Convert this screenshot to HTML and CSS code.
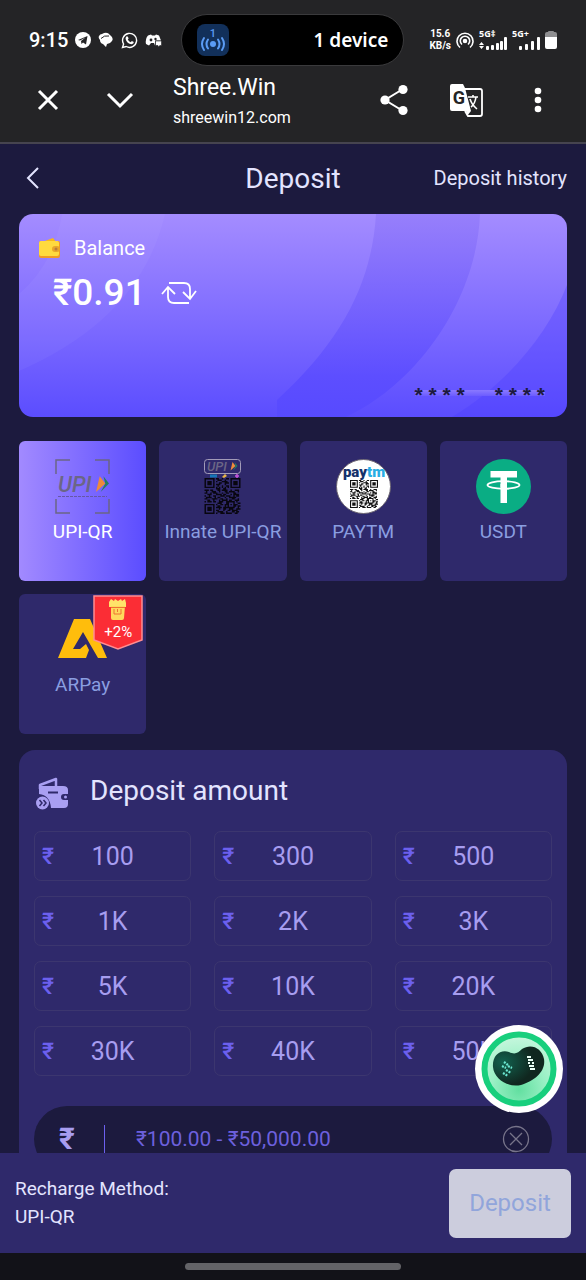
FILE: index.html
```html
<!DOCTYPE html>
<html lang="en">
<head>
    <meta charset="UTF-8">
    <meta name="viewport" content="width=device-width, initial-scale=1">
    <title>Deposit</title>
    <link rel="stylesheet" href="styles.css">
</head>
<body>
<svg class="defs" aria-hidden="true">
    <symbol id="qr" viewBox="0 0 25 25">
        <path fill="none" stroke="currentColor" d="M.5.5h6v6h-6zM18.500.5h6v6h-6zM.5 18.500h6v6h-6z"/>
        <path fill="currentColor" d="M2 2h3v3h-3zM20 2h3v3h-3zM2 20h3v3h-3z"/>
        <path stroke="currentColor" d="M8 .5h2m2 0h1m2 0h2M9 1.500h3m2 0h1M8 2.500h1m3 0h4M10 3.500h2m2 0h3M8 4.500h3m3 0h1M9 5.500h1m2 0h1m2 0h2M8 6.500h1m1 0h1m1 0h1m1 0h1m1 0h1M8 7.500h3m2 0h2M0 8.500h3m1 0h2m3 0h2m1 0h4m2 0h1m2 0h3M1 9.500h1m3 0h3m2 0h1m3 0h2m1 0h4m2 0h1M0 10.500h2m2 0h1m1 0h3m3 0h1m2 0h2m3 0h2M2 11.500h3m3 0h4m1 0h2m3 0h1m1 0h4M0 12.500h1m2 0h1m2 0h2m3 0h3m1 0h3m2 0h1m1 0h2M1 13.500h4m2 0h1m1 0h2m3 0h1m2 0h5M0 14.500h2m3 0h4m2 0h2m2 0h1m3 0h2m2 0h1M2 15.500h2m2 0h1m3 0h1m1 0h4m1 0h2m2 0h3M0 16.500h1m1 0h3m1 0h2m2 0h3m2 0h6m1 0h1M9 17.500h3m3 0h2m3 0h1m2 0h2M8 18.500h1m2 0h2m1 0h3m1 0h1m1 0h3M9 19.500h2m3 0h1m1 0h1m3 0h2m1 0h2M8 20.500h4m1 0h8m2 0h1M10 21.500h1m2 0h2m2 0h3m2 0h3M8 22.500h2m3 0h1m2 0h2m1 0h4M9 23.500h4m2 0h1m3 0h2m1 0h2M8 24.500h1m2 0h3m1 0h4m2 0h2"/>
    </symbol>
    <symbol id="upi-arrow" viewBox="0 0 14 18">
        <path d="M4 0 10 8 0 17z" fill="#ee8a3c"/>
        <path d="M8 0 14 8 5 17 10 8z" fill="#267e62"/>
    </symbol>
</svg>

<!-- status bar -->
<div class="status">
    <div class="status-left">
        <span class="clock">9:15</span>
        <svg width="16" height="16" viewBox="0 0 16 16"><circle cx="8" cy="8" r="8" fill="#fff"/><path d="M3 8 12.500 4 11 12.500 8 10.500 6.500 12 6 9 10.500 5.500 5 8.600z" fill="#242426"/></svg>
        <svg width="16" height="16" viewBox="0 0 16 16" fill="#fff"><path d="M4 2Q9-1 12 3q4 3 2 6-2 3-5 3l-1 3-3-3Q2 11 2 8 0 6 1 4 2 2 4 2z"/><path d="M3 6.500Q6 3 11 4" fill="none" stroke="#242426"/></svg>
        <svg width="17" height="17" viewBox="0 0 17 17"><path d="M1.500 15.500 2.600 12A7 7 0 1 1 5.200 14.500z" fill="none" stroke="#fff" stroke-width="1.400"/><path d="M5 5q1-1.500 2 0l.6 1.500-.8 1q1 2 3 2.700l1-1.200 2 1q0 2-2.300 2.300Q6 12 4.600 7 4.500 6 5 5z" fill="#fff"/></svg>
        <svg width="17" height="16" viewBox="0 0 17 16"><path d="M3 3.500 6 2.500 7 3.500h3l1-1 3 1 2 5H10v5L9 11H6L4 13.500 1 12Q0 7 3 3.500z" fill="#fff"/><circle cx="6" cy="8" r="1.400" fill="#242426"/><circle cx="10.500" cy="7" r="1.200" fill="#242426"/><path d="M10.500 9h6v4.500H15L13 15v-1.500h-2.500z" fill="#fff" stroke="#242426" stroke-width=".6"/></svg>
    </div>
    <div class="island">
        <svg width="32" height="32" viewBox="0 0 32 32">
            <rect width="32" height="32" rx="8" fill="#12305a"/>
            <text class="count" x="16" y="13">1</text>
            <circle cx="16" cy="20" r="3" fill="#5b9cf5"/>
            <path d="M11 15.500q-3 4.500 0 9M7 14q-4 6 0 12M21 15.500q3 4.500 0 9M25 14q4 6 0 12" fill="none" stroke="#5b9cf5" stroke-width="2" stroke-linecap="round"/>
        </svg>
        <span>1 device</span>
    </div>
    <div class="status-right">
        <span class="speed">15.6<br>KB/s</span>
        <svg width="18" height="17" viewBox="0 0 18 17" fill="none" stroke="#fff" stroke-width="1.600"><path d="M4 15.500a8 8 0 1 1 10 0M6 12.500a4.700 4.700 0 1 1 6 0"/><circle cx="9" cy="9" r="1.500" fill="#fff"/></svg>
        <div class="signal">
            <span>5G‡</span>
            <svg width="28" height="13" viewBox="0 0 28 13" fill="#fff"><path d="M0 8 2.500 5 5 8zM0 9h5l-2.500 3z"/><rect x="7" y="9" width="3" height="4" rx="1"/><rect x="12" y="8" width="3" height="5" rx="1"/><rect x="17" y="6" width="3" height="7" rx="1"/><rect x="21" y="4" width="3" height="9" rx="1"/><rect x="25" y="0" width="3" height="13" rx="1"/></svg>
        </div>
        <div class="signal">
            <span>5G+</span>
            <svg width="28" height="13" viewBox="0 0 28 13" fill="#fff"><rect x="7" y="9" width="3" height="4" rx="1"/><rect x="13" y="7" width="3" height="6" rx="1"/><rect x="19" y="4" width="3" height="9" rx="1"/><rect x="25" y="0" width="3" height="13" rx="1"/></svg>
        </div>
        <svg width="12" height="18" viewBox="0 0 12 18"><path d="M2 1h1q0-1 1-1h4q1 0 1 1h1q2 0 2 2v4H0V3q0-2 2-2z" fill="#8e8e90"/><path d="M0 6h12v10q0 2-2 2H2q-2 0-2-2z" fill="#fff"/></svg>
    </div>
</div>

<!-- browser toolbar -->
<div class="toolbar">
    <button class="tool" aria-label="Close"><svg width="24" height="24" viewBox="0 0 24 24"><path d="M3 3 21 21M21 3 3 21"/></svg></button>
    <button class="tool" aria-label="Minimise"><svg width="28" height="24" viewBox="0 0 28 24"><path d="M2 6 14 18 26 6"/></svg></button>
    <div class="site">
        <div class="site-name">Shree.Win</div>
        <div class="site-url">shreewin12.com</div>
    </div>
    <button class="tool" aria-label="Share"><svg width="28" height="32" viewBox="0 0 28 32"><path d="M23 5 5 16 23 27" stroke-width="2"/><g fill="#fff" stroke="none"><circle cx="23" cy="5.500" r="4.600"/><circle cx="5" cy="16" r="4.600"/><circle cx="23" cy="26.500" r="4.600"/></g></svg></button>
    <button class="tool" aria-label="Translate"><svg width="34" height="34" viewBox="0 0 34 34"><path d="M16 6h15q2 0 2 2v23q0 2-2 2H19l-3-5" stroke-width="1.800"/><path d="M3 1h11l2 4 6 23H3q-2 0-2-2V3q0-2 2-2zM17 28h5l-4 5z" fill="#fff" stroke="none"/><text class="glyph" x="10" y="21">G</text><path d="M19 14h10M24 12v2M27 14q-1 7-5 10M21 16q2 6 7 10" stroke-width="1.600"/></svg></button>
    <button class="tool" aria-label="More"><svg width="8" height="26" viewBox="0 0 8 26"><g fill="#fff" stroke="none"><circle cx="4" cy="4" r="3.300"/><circle cx="4" cy="13" r="3.300"/><circle cx="4" cy="22" r="3.300"/></g></svg></button>
</div>

<div class="page">
    <header class="head">
        <a class="back" href="#" aria-label="Back"><svg width="14" height="22" viewBox="0 0 14 22"><path d="M12 1 2 11 12 21" fill="none" stroke="#e3e4ff" stroke-width="2"/></svg></a>
        <h1>Deposit</h1>
        <a class="history" href="#">Deposit history</a>
    </header>

    <section class="balance">
        <svg class="balance-bg" viewBox="0 0 548 203" preserveAspectRatio="none" aria-hidden="true">
            <defs>
                <linearGradient id="band" x1="0" y1="0" x2="0" y2="1"><stop offset="0" stop-color="#977ffb"/><stop offset=".8" stop-color="#5d4eff"/><stop offset="1" stop-color="#574aff"/></linearGradient>
            </defs>
            <path d="M43 0H146Q122 104 0 157V80Q35 50 43 0z" fill="#fff" opacity=".04"/>
            <path d="M357 0C353 65 326 124 258 186V203H327C400 169 458 84 461 0z" fill="url(#band)"/>
            <path d="M548 71C529 120 489 169 433 203H548z" fill="#4a3bff" opacity=".3"/>
        </svg>
        <div class="balance-title">
            <svg width="22" height="20" viewBox="0 0 22 20"><path d="M3 4 14 0 18 5z" fill="#f7b71d"/><rect y="3" width="21" height="17" rx="2" fill="#f19a24"/><rect y="3" width="20" height="15" rx="2" fill="#ffda3f"/><rect x="13" y="8" width="8" height="6" rx="3" fill="#e9a62a"/><circle cx="17" cy="11" r="1.500" fill="#bb7c3c"/></svg>
            <span>Balance</span>
        </div>
        <div class="balance-amount">
            <span>₹0.91</span>
            <button class="refresh" aria-label="Refresh"><svg width="36" height="24" viewBox="0 0 36 24"><path d="M8 2H23Q29 2 29 8V17M22 11 29 18 35 10M28 22H13Q7 22 7 16V7M1 13 7 6 14 13" fill="none" stroke="#fff" stroke-width="1.800"/></svg></button>
        </div>
        <div class="stars"><span>* * * *</span><span>* * * *</span></div>
    </section>

    <section class="methods">
        <button class="method active">
            <svg width="55" height="55" viewBox="0 0 55 55"><path d="M1 15V1H15M40 1H54V15M54 40V54H40M15 54H1V40" fill="none" stroke="#6b6685" stroke-width="1.500"/><text class="upi" x="3" y="33">UPI</text><use href="#upi-arrow" x="41" y="17" width="13" height="17"/><path d="M3 37.500H52" stroke="#6558a6" stroke-dasharray="3 1"/></svg>
            <span>UPI-QR</span>
        </button>
        <button class="method">
            <svg width="55" height="55" viewBox="0 0 55 55"><rect x="9.500" y=".5" width="36" height="14" rx="3" fill="none" stroke="#a29bb8"/><text class="upi small" x="12" y="12">UPI</text><use href="#upi-arrow" x="35" y="3" width="8" height="9"/><path d="M15 17h7" stroke="#1576b7" stroke-width="3"/><path d="M27 18l3-3 2 2-3 2z" fill="#e7b545"/><path d="M42 15v4m-2-2h4" stroke="#c955dc" stroke-width="1.500"/><g color="#08060f"><use href="#qr" x="9" y="19" width="37" height="36"/></g></svg>
            <span>Innate UPI-QR</span>
        </button>
        <button class="method">
            <svg width="55" height="55" viewBox="0 0 55 55"><circle cx="27.500" cy="27.500" r="27" fill="#fff" stroke="#6b6470"/><text class="paytm" x="28" y="18">pay<tspan fill="#29aee4">tm</tspan></text><g color="#111"><use href="#qr" x="14" y="21" width="28" height="28"/></g></svg>
            <span>PAYTM</span>
        </button>
        <button class="method">
            <svg width="55" height="55" viewBox="0 0 55 55"><circle cx="27.500" cy="27.500" r="27.500" fill="#0aad84"/><path d="M14.500 12H41V18.500H31V44H24.500V18.500H14.500z" fill="#fff"/><ellipse cx="27.500" cy="26" rx="16" ry="3.800" fill="none" stroke="#fff" stroke-width="1.800"/><path d="M24.500 25h6.500v3.500h-6.500z" fill="#fff"/></svg>
            <span>USDT</span>
        </button>
        <button class="method">
            <svg width="55" height="55" viewBox="0 0 55 55"><path d="M19 7H35L52 46H43L28 20 18 37H25L31 32 34 38 31 46H3z" fill="#ffbd0c"/></svg>
            <span>ARPay</span>
            <span class="bonus">
                <svg width="50" height="55" viewBox="0 0 50 55" aria-hidden="true"><path d="M1 1H49V45L25 54 1 45z" fill="#fb2d35" stroke="#ff8d91" stroke-width="1.500"/><path d="M16 7 18 4 21 6 22 4 25 6 28 4 29 6 32 4 33 8V12H16z" fill="#ffe36a"/><path d="M18 11H32L31 23Q31 25 29 25H20Q18 25 18 23z" fill="#ffd85c"/><path d="M18 12.500H32M21 14V19H28V14M24.500 14V17" fill="none" stroke="#ef7132"/></svg>
                <b>+2%</b>
            </span>
        </button>
    </section>

    <section class="amount">
        <h2>
            <svg width="33" height="33" viewBox="0 0 33 33"><path d="M4 12V8L20 2V10" fill="none" stroke="#a99ff2" stroke-width="2.500" stroke-linejoin="round"/><path d="M5 9H27Q32 9 32 13V17H28Q25 17 25 20T28 23H32V27Q32 31 28 31H15Q14 18 3 17V11Q3 9 5 9z" fill="#a99ff2"/><path d="M12 15.500H22" stroke="#2f296b" stroke-width="2"/><circle cx="29.500" cy="20" r="1.500" fill="#a99ff2"/><circle cx="6.500" cy="26" r="6.500" fill="#a99ff2"/><path d="M3.500 23 6 26 3.500 29M7.500 23 10 26 7.500 29" fill="none" stroke="#2f296b" stroke-width="1.500"/></svg>
            Deposit amount
        </h2>
        <div class="keys">
            <button class="key"><i>₹</i><span>100</span></button>
            <button class="key"><i>₹</i><span>300</span></button>
            <button class="key"><i>₹</i><span>500</span></button>
            <button class="key"><i>₹</i><span>1K</span></button>
            <button class="key"><i>₹</i><span>2K</span></button>
            <button class="key"><i>₹</i><span>3K</span></button>
            <button class="key"><i>₹</i><span>5K</span></button>
            <button class="key"><i>₹</i><span>10K</span></button>
            <button class="key"><i>₹</i><span>20K</span></button>
            <button class="key"><i>₹</i><span>30K</span></button>
            <button class="key"><i>₹</i><span>40K</span></button>
            <button class="key"><i>₹</i><span>50K</span></button>
        </div>
        <div class="field">
            <label for="sum">₹</label>
            <input id="sum" type="text" inputmode="decimal" placeholder="₹100.00 - ₹50,000.00">
            <button class="clear" aria-label="Clear"><svg width="28" height="28" viewBox="0 0 28 28"><path d="M8 8 20 20M20 8 8 20" stroke="#77748a" stroke-width="1.300"/><circle cx="14" cy="14" r="12.500" fill="none" stroke="#77748a" stroke-width="1.300"/></svg></button>
        </div>
    </section>
</div>

<footer class="foot">
    <p>Recharge Method:<br>UPI-QR</p>
    <button class="submit">Deposit</button>
    <!-- floating support button -->
    <button class="support" aria-label="Support">
        <svg width="88" height="88" viewBox="0 0 88 88">
            <defs>
                <radialGradient id="glow" cx=".5" cy=".8" r=".8"><stop offset="0" stop-color="#62dfa0"/><stop offset=".5" stop-color="#9af0c5"/><stop offset="1" stop-color="#c9f7df"/></radialGradient>
                <radialGradient id="bean" cx=".2" cy=".4" r=".6"><stop offset="0" stop-color="#12614e"/><stop offset="1" stop-color="#10271f"/></radialGradient>
            </defs>
            <circle cx="44" cy="44" r="44" fill="#fff"/>
            <circle cx="44" cy="44" r="34.500" fill="url(#glow)" stroke="#18cf7d" stroke-width="6"/>
            <path d="M18 42C17 31 25 24 34 27 40 30 43 28 47 24 56 18 67 23 69 34 71 46 60 56 46 60 33 63 19 54 18 42z" fill="url(#bean)"/>
            <path d="M29 37 33 40M27 41 31 43M33 41 37 43M31 45 36 48M28 48 33 51" stroke="#6be6d0" stroke-width="2.200" stroke-dasharray="2 1"/>
            <path d="M52 32H56M53 35H58M53 38H55M57 38H59M54 41H59M55 44H60" stroke="#eafff5" stroke-width="2"/>
        </svg>
    </button>
</footer>
<div class="navbar"><span></span></div>
</body>
</html>
```
FILE: styles.css
```css
*{box-sizing:border-box;}
body{
    display:flex;
    flex-direction:column;
    height:100vh;
    margin:0;
    overflow:hidden;
    background-color:#1c1a3e;
    color:#e3e4ff;
    font-family:Roboto,"Liberation Sans",sans-serif;
}
h1,h2,p{margin:0;font-weight:400;}
a{color:inherit;text-decoration:none;}
button{padding:0;border:0;background:none;color:inherit;font:inherit;cursor:pointer;}
svg{display:block;flex:none;}
.defs{position:absolute;width:0;height:0;}

/*status bar*/
.status{
    display:flex;
    flex:none;
    align-items:center;
    padding:14px 29px 0;
    background-color:#242426;
    color:#fff;
}
.status-left,.status-right{display:flex;align-items:center;}
.status-left{gap:7px;}
.status-right{gap:5px;}
.clock{font-size:20px;font-weight:500;}
.island{
    display:flex;
    flex:1;
    align-items:center;
    justify-content:space-between;
    height:52px;
    margin:0 25px 0 19px;
    padding:0 15px;
    border:1px solid #3a3a3c;
    border-radius:26px;
    background-color:#000;
    font:600 19px "Noto Sans",sans-serif;
}
.count{fill:#5b9cf5;font:500 11px Roboto,sans-serif;text-anchor:middle;}
.speed{font-size:10px;font-weight:700;line-height:12px;text-align:center;}
.signal span{display:block;font:700 9px/7px "Noto Sans",sans-serif;}

/*browser toolbar*/
.toolbar{
    display:flex;
    flex:none;
    align-items:center;
    gap:24px;
    height:78px;
    padding:0 24px 8px;
    border-bottom:2px solid #46444f;
    background-color:#242426;
    color:#fff;
}
.tool{display:flex;align-items:center;justify-content:center;width:48px;height:48px;}
.tool svg{fill:none;stroke:#fff;stroke-width:3;}
.tool .glyph{fill:#242426;stroke:none;font:700 18px Roboto,sans-serif;text-anchor:middle;}
.site{flex:1;margin-left:5px;padding-top:4px;}
.site-name{font-size:23px;line-height:32px;}
.site-url{font-size:16px;line-height:28px;}

/*page*/
.page{flex:1;min-height:0;padding:0 19px;overflow:hidden;}
.head{display:grid;grid-template-columns:1fr auto 1fr;align-items:center;height:68px;margin-bottom:2px;}
.head h1{font-size:28px;}
.back{padding-left:7px;}
.history{font-size:20px;text-align:right;}

.balance{
    display:flex;
    flex-direction:column;
    position:relative;
    height:203px;
    padding:22px 22px 14px 20px;
    overflow:hidden;
    border-radius:14px;
    background:linear-gradient(#a48cff,#7967ff 60%,#5b4dff);
    color:#fff;
}
.balance-bg{position:absolute;top:0;left:0;width:100%;height:100%;}
.balance-title,.balance-amount,.stars{display:flex;position:relative;align-items:center;}
.balance-title{gap:13px;font-size:20px;line-height:24px;}
.balance-amount{gap:15px;padding-left:14px;font-size:37px;font-weight:500;line-height:66px;}
.stars{
    gap:30px;
    align-self:flex-end;
    height:16px;
    margin-top:auto;
    background:linear-gradient(#8a79ff,#6c5cff) center 3px/100% 6px no-repeat;
    color:#1c1a3e;
    font:700 21px/32px "Liberation Sans",sans-serif;
}

.methods{display:grid;grid-template-columns:repeat(4,1fr);gap:13px;margin-top:24px;}
.method{
    display:flex;
    flex-direction:column;
    position:relative;
    align-items:center;
    gap:6px;
    height:140px;
    padding-top:18px;
    border-radius:6px;
    background-color:#2f296b;
    color:#8a9ee0;
    font-size:19px;
    line-height:24px;
    white-space:nowrap;
}
.method.active{background:linear-gradient(90deg,#a28aff,#5b4dff);color:#fff;}
.upi{fill:#6b6685;font:italic 500 22px Roboto,sans-serif;}
.upi.small{font-size:13px;}
.paytm{fill:#14316b;font:900 15px Roboto,sans-serif;text-anchor:middle;}
.bonus{position:absolute;top:1px;right:3px;color:#fff;}
.bonus b{position:absolute;top:28px;left:0;width:100%;font-size:15px;font-weight:400;line-height:18px;text-align:center;}

.amount{margin-top:16px;padding:15px;border-radius:16px;background-color:#2f296b;}
.amount h2{display:flex;align-items:center;gap:21px;height:50px;padding-left:2px;font-size:28px;}
.amount h2 svg{margin-top:6px;}
.keys{display:grid;grid-template-columns:repeat(3,1fr);gap:15px 23px;margin-top:16px;}
.key{
    display:flex;
    align-items:center;
    height:50px;
    padding:0 6px;
    border:1px solid #3c366f;
    border-radius:7px;
    color:#a79df0;
    font-size:25px;
}
.key i{width:14px;color:#6c60ee;font-size:23px;font-style:normal;font-weight:500;}
.key span{flex:1;padding-right:14px;text-align:center;}
.field{
    display:flex;
    align-items:center;
    height:66px;
    margin-top:30px;
    padding:0 22px 0 25px;
    border-radius:33px;
    background-color:#1c1a3e;
}
.field label{width:46px;border-right:1px solid #6c60ee;color:#a79df0;font-size:30px;font-weight:700;line-height:28px;}
.field input{
    flex:1;
    min-width:0;
    padding:0 0 0 31px;
    border:0;
    outline:0;
    background:none;
    color:#a79df0;
    font:21px Roboto,sans-serif;
}
.field input::placeholder{color:#6c60dd;}

/*bottom bar*/
.foot{
    display:flex;
    flex:none;
    position:relative;
    align-items:center;
    justify-content:space-between;
    height:100px;
    padding:0 15px;
    background-color:#2f296b;
    font-size:19px;
    line-height:28px;
}
.submit{width:122px;height:69px;border-radius:7px;background-color:#cccddd;color:#91a5db;font-size:24px;}
.support{position:absolute;right:23px;bottom:140px;border-radius:50%;}
.navbar{display:flex;flex:none;justify-content:center;height:27px;padding-top:10px;background-color:#121218;}
.navbar span{width:37%;height:7px;border-radius:4px;background-color:#636367;}
```
